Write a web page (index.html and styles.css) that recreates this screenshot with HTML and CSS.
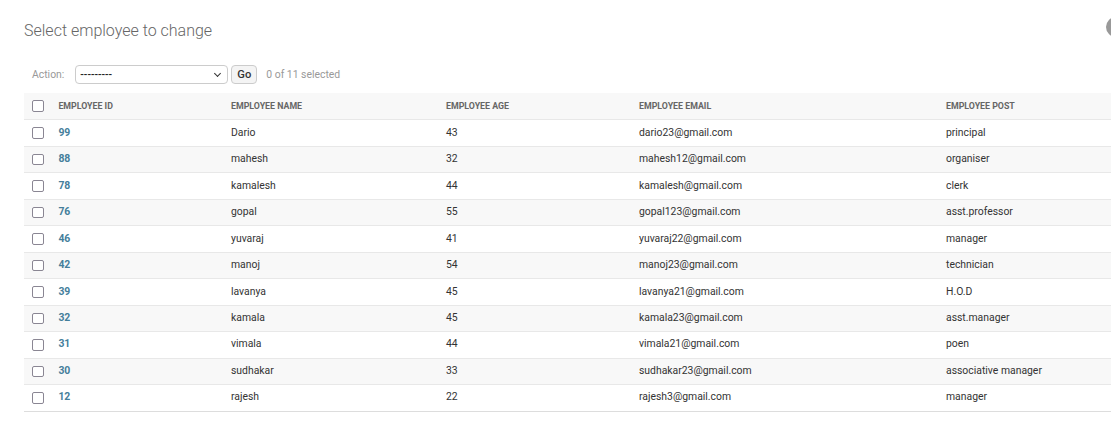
FILE: index.html
```html
<!DOCTYPE html>
<html lang="en">
<head>
<meta charset="utf-8">
<title>Select employee to change</title>
<link rel="stylesheet" href="styles.css">
</head>
<body>
<div class="content">
  <div class="page-head">
    <h1 class="title">Select employee to change</h1>
    <a class="add-link" href="#" aria-label="Add employee"></a>
  </div>
  <div class="actions">
    <label class="action-label">Action:</label>
    <span class="select-wrap">
      <select class="action-select"><option>---------</option></select>
    </span>
    <button class="go-btn" type="button">Go</button>
    <span class="counter">0 of 11 selected</span>
  </div>
  <table class="result-list">
    <colgroup>
      <col class="c-check"><col class="c-id"><col class="c-name"><col class="c-age"><col class="c-email"><col class="c-post">
    </colgroup>
    <thead>
      <tr>
        <th class="cb"><input type="checkbox" class="box"></th>
        <th>Employee id</th>
        <th>Employee name</th>
        <th>Employee age</th>
        <th>Employee email</th>
        <th>Employee post</th>
      </tr>
    </thead>
    <tbody>
      <tr><td class="cb"><input type="checkbox" class="box"></td><td class="id"><a href="#">99</a></td><td>Dario</td><td>43</td><td>dario23@gmail.com</td><td>principal</td></tr>
      <tr><td class="cb"><input type="checkbox" class="box"></td><td class="id"><a href="#">88</a></td><td>mahesh</td><td>32</td><td>mahesh12@gmail.com</td><td>organiser</td></tr>
      <tr><td class="cb"><input type="checkbox" class="box"></td><td class="id"><a href="#">78</a></td><td>kamalesh</td><td>44</td><td>kamalesh@gmail.com</td><td>clerk</td></tr>
      <tr><td class="cb"><input type="checkbox" class="box"></td><td class="id"><a href="#">76</a></td><td>gopal</td><td>55</td><td>gopal123@gmail.com</td><td>asst.professor</td></tr>
      <tr><td class="cb"><input type="checkbox" class="box"></td><td class="id"><a href="#">46</a></td><td>yuvaraj</td><td>41</td><td>yuvaraj22@gmail.com</td><td>manager</td></tr>
      <tr><td class="cb"><input type="checkbox" class="box"></td><td class="id"><a href="#">42</a></td><td>manoj</td><td>54</td><td>manoj23@gmail.com</td><td>technician</td></tr>
      <tr><td class="cb"><input type="checkbox" class="box"></td><td class="id"><a href="#">39</a></td><td>lavanya</td><td>45</td><td>lavanya21@gmail.com</td><td>H.O.D</td></tr>
      <tr><td class="cb"><input type="checkbox" class="box"></td><td class="id"><a href="#">32</a></td><td>kamala</td><td>45</td><td>kamala23@gmail.com</td><td>asst.manager</td></tr>
      <tr><td class="cb"><input type="checkbox" class="box"></td><td class="id"><a href="#">31</a></td><td>vimala</td><td>44</td><td>vimala21@gmail.com</td><td>poen</td></tr>
      <tr><td class="cb"><input type="checkbox" class="box"></td><td class="id"><a href="#">30</a></td><td>sudhakar</td><td>33</td><td>sudhakar23@gmail.com</td><td>associative manager</td></tr>
      <tr><td class="cb"><input type="checkbox" class="box"></td><td class="id"><a href="#">12</a></td><td>rajesh</td><td>22</td><td>rajesh3@gmail.com</td><td>manager</td></tr>
    </tbody>
  </table>
</div>
</body>
</html>
```

FILE: styles.css
```css
html, body {
  margin: 0;
  padding: 0;
  background: #fff;
  overflow: hidden;
}
body {
  font-family: Roboto, "Liberation Sans", Arial, sans-serif;
  color: #333;
  font-size: 10.4px;
}
.content {
  width: 1250px;
  padding: 17px 0 0 24px;
}
.page-head {
  display: grid;
  grid-template-columns: 1082px 110px;
  align-items: start;
  height: 40px;
}
.title {
  margin: 3.6px 0 0 0;
  font-size: 16px;
  line-height: 20px;
  font-weight: 300;
  color: #666;
}
.add-link {
  display: block;
  height: 20px;
  border-radius: 10px;
  background: #999;
  text-decoration: none;
}
.actions {
  display: flex;
  align-items: center;
  height: 35.7px;
  padding-left: 8px;
}
.action-label {
  color: #999;
  font-size: 10.4px;
  margin-right: 11px;
}
.select-wrap {
  position: relative;
  display: block;
}
.select-wrap::after {
  content: "";
  position: absolute;
  right: 8px;
  top: 6px;
  width: 4px;
  height: 4px;
  border-right: 1.5px solid #333;
  border-bottom: 1.5px solid #333;
  transform: rotate(45deg);
  pointer-events: none;
}
.action-select {
  -webkit-appearance: none;
  appearance: none;
  display: block;
  width: 153px;
  height: 19px;
  margin: 0;
  padding: 0 0 0 4px;
  border: 1px solid #ccc;
  border-radius: 4px;
  background: #fff;
  color: #222;
  font-family: Roboto, "Liberation Sans", Arial, sans-serif;
  font-size: 10.4px;
  font-weight: 500;
}
.go-btn {
  height: 19px;
  width: 26px;
  margin: 0 0 0 3px;
  padding: 0;
  border: 1px solid #ccc;
  border-radius: 4px;
  background: #f4f4f4;
  color: #333;
  font-family: Roboto, "Liberation Sans", Arial, sans-serif;
  font-size: 11.2px;
  font-weight: 500;
}
.counter {
  margin-left: 9px;
  color: #999;
  font-size: 10.4px;
}
.result-list {
  width: 1250px;
  table-layout: fixed;
  border-collapse: collapse;
}
.c-check { width: 28px; }
.c-id { width: 172.6px; }
.c-name { width: 215px; }
.c-age { width: 193px; }
.c-email { width: 307px; }
.result-list th,
.result-list td {
  text-align: left;
  vertical-align: middle;
  padding: 6.4px 6.4px;
  line-height: 12.8px;
  border-bottom: 1px solid #e8e8e8;
  white-space: nowrap;
}
.result-list thead th {
  background: #f8f8f8;
  color: #666;
  font-size: 8.8px;
  font-weight: 700;
  text-transform: uppercase;
  padding-top: 6.9px;
  padding-bottom: 6.9px;
}
.result-list td {
  font-size: 10.4px;
  color: #333;
  padding-top: 6.35px;
  padding-bottom: 6.35px;
}
.result-list tbody tr:nth-child(even) td {
  background: #f8f8f8;
}
.result-list .cb {
  padding-left: 8px;
  padding-right: 0;
}
.box {
  -webkit-appearance: none;
  appearance: none;
  display: block;
  box-sizing: border-box;
  width: 11.5px;
  height: 11.5px;
  margin: 0;
  border: 1.5px solid #8a8693;
  border-radius: 2px;
  background: #fff;
}
.id a {
  color: #447e9b;
  font-weight: 700;
  text-decoration: none;
}
.result-list tbody tr:last-child td {
  border-bottom: 1px solid #ddd;
}
```
